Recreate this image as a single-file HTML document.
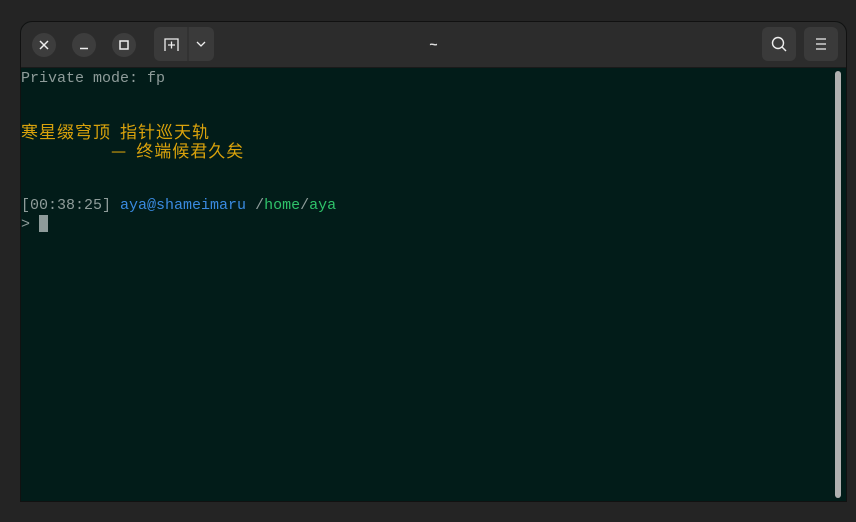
<!DOCTYPE html>
<html><head><meta charset="utf-8"><style>
html,body{margin:0;padding:0;width:856px;height:522px;background:#242424;overflow:hidden}
.win{position:absolute;left:20px;top:21px;width:825px;height:479px;background:#021c19;border-radius:12px 12px 0 0;overflow:hidden;border:1px solid #111}
.hdr{position:absolute;left:0;top:0;right:0;height:45px;background:#2c2c2c;border-bottom:1px solid #1a1a1a}
.cb{position:absolute;top:11px;width:24px;height:24px;border-radius:50%;background:#3d3d3d}
.btn{position:absolute;top:5px;height:34px;background:#3a3a3a;border-radius:6px}
.title{position:absolute;left:0;right:0;top:14px;text-align:center;color:#ddd;font:bold 14px "Liberation Sans",sans-serif}
.l{position:absolute;left:0;height:18px;font:15px/18px "Liberation Mono","Noto Sans CJK SC",monospace;color:#8f9c9a;white-space:pre}
.o{color:#d9a20c}.b{color:#3a8ae0}.g{color:#2fc36a}
.c{font-family:"Noto Sans CJK SC",sans-serif;font-size:17px;letter-spacing:1px}
.cur{display:inline-block;width:9px;height:17px;background:#8e9b9a;vertical-align:-4px}
.sb{position:absolute;left:814px;top:49px;width:6px;height:427px;background:#b0b0b0;border-radius:3px}
</style></head><body>
<div class="win">
<div class="hdr">
<div class="cb" style="left:11px"><svg width="24" height="24"><path d="M8 8L16 16M16 8L8 16" stroke="#eee" stroke-width="1.5"/></svg></div>
<div class="cb" style="left:51px"><svg width="24" height="24"><path d="M8 15.5H16" stroke="#eee" stroke-width="1.5"/></svg></div>
<div class="cb" style="left:91px"><svg width="24" height="24"><rect x="8" y="8" width="8" height="8" fill="none" stroke="#eee" stroke-width="1.5"/></svg></div>
<div class="btn" style="left:133px;width:60px"><svg width="60" height="34"><path d="M11 24V12H24V24" fill="none" stroke="#eee" stroke-width="1.3"/><path d="M17.5 14.5V21.5M14 18H21" stroke="#eee" stroke-width="1.3"/><path d="M34 0V34" stroke="#2a2a2a"/><path d="M43 15L47 19L51 15" fill="none" stroke="#eee" stroke-width="1.3"/></svg></div>
<div class="title">~</div>
<div class="btn" style="left:741px;width:34px"><svg width="34" height="34"><circle cx="16" cy="16" r="5.5" fill="none" stroke="#eee" stroke-width="1.4"/><path d="M20 20L24 24" stroke="#eee" stroke-width="1.4"/></svg></div>
<div class="btn" style="left:783px;width:34px"><svg width="34" height="34"><path d="M12 12H22M12 17H22M12 22H22" stroke="#eee" stroke-width="1.2"/></svg></div>
</div>
<div class="l" style="top:48px">Private mode: fp</div>
<div class="l o" style="top:100px"><span class="c">寒星缀穹顶</span> <span class="c">指针巡天轨</span></div>
<div class="l o" style="top:119px">          <span class="c">—</span> <span class="c">终端候君久矣</span></div>
<div class="l" style="top:175px">[00:38:25] <span class="b">aya@shameimaru</span> /<span class="g">home</span>/<span class="g">aya</span></div>
<div class="l" style="top:193px">&gt; <span class="cur"></span></div>
<div class="sb"></div>
</div>
</body></html>
